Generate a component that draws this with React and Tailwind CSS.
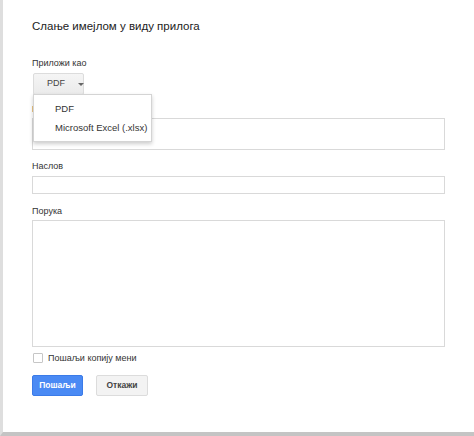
import React, { useState } from "react";

export default function App() {
  const [copy, setCopy] = useState(false);
  const font = { fontFamily: '"Liberation Sans", Arial, sans-serif' };

  return (
    <div
      style={font}
      className="relative w-[474px] h-[436px] bg-white border-l-[3px] border-l-[#dedede] border-b-[4px] border-b-[#c4c4c4] overflow-hidden"
    >
      <div className="flex flex-col pl-[29px] pt-[16px] w-[442px]">
        <h2 className="text-[11.5px] leading-[20px] text-[#222]">Слање имејлом у виду прилога</h2>

        <div className="mt-[19px] text-[9px] leading-[16px] text-[#333]">Приложи као</div>
        <div className="mt-[2px] relative">
          <button className="flex items-center w-[51px] h-[22px] ml-[1px] bg-gradient-to-b from-[#f5f5f5] to-[#ebebeb] border border-[#dcdcdc] rounded-[2px] text-[9px] text-[#444]">
            <span className="ml-[13px]">PDF</span>
            <span className="ml-[13px] w-0 h-0 border-l-[3px] border-r-[3px] border-t-[3px] border-l-transparent border-r-transparent border-t-[#666]" />
          </button>

          {/* open dropdown menu */}
          <div className="absolute left-[1px] top-[21px] z-10 w-[119px] h-[48px] bg-white border border-[#d4d4d4] shadow-[0_2px_4px_rgba(0,0,0,0.2)] flex flex-col justify-center text-[9.5px] text-[#333]">
            <div className="pl-[21px] leading-[19px]">PDF</div>
            <div className="pl-[21px] leading-[19px] whitespace-nowrap">Microsoft Excel (.xlsx)</div>
          </div>
        </div>

        <div className="mt-[6px] text-[9px] leading-[16px] text-[#333]">Кому</div>
        <input className="mt-[1px] h-[32px] w-full border border-[#d9d9d9] outline-none" />

        <div className="mt-[8px] text-[9px] leading-[16px] text-[#333]">Наслов</div>
        <input className="mt-[2px] h-[18px] w-full border border-[#d9d9d9] outline-none" />

        <div className="mt-[9px] text-[9px] leading-[16px] text-[#333]">Порука</div>
        <textarea className="mt-[1px] h-[127px] w-full border border-[#d9d9d9] outline-none resize-none" />

        <label className="mt-[3px] flex items-center gap-[5px] text-[9px] leading-[16px] text-[#333]">
          <span
            onClick={() => setCopy(!copy)}
            className="ml-[1px] w-[10px] h-[10px] border border-[#c6c6c6] rounded-[1px] bg-white"
          />
          Пошаљи копију мени
        </label>

        <div className="mt-[9px] flex gap-[13px]">
          <button className="w-[51px] h-[21px] bg-[#4a8af4] border border-[#3b7be8] rounded-[2px] text-white text-[8.5px] font-bold">
            Пошаљи
          </button>
          <button className="w-[52px] h-[21px] bg-[#f3f3f3] border border-[#dcdcdc] rounded-[2px] text-[#444] text-[8.5px] font-bold">
            Откажи
          </button>
        </div>
      </div>
    </div>
  );
}
